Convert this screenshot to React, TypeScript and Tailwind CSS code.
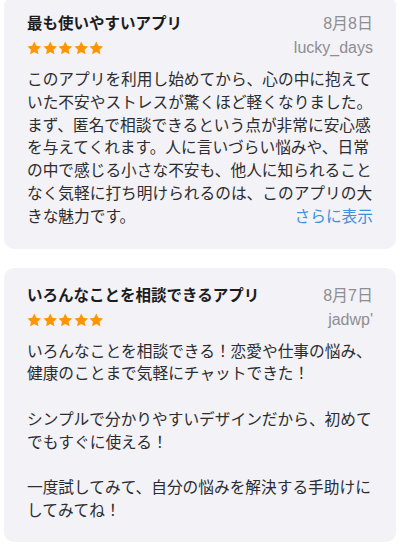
import React from "react";

const font = {
  fontFamily: '"Liberation Sans", "Noto Sans CJK JP", sans-serif',
};

function Stars() {
  return (
    <div className="flex gap-[1px]">
      {[0, 1, 2, 3, 4].map((i) => (
        <svg key={i} width="14.5" height="14" viewBox="0 0 24 23" className="block">
          <path
            d="M12 0.8l3.4 7.1 7.8 1-5.7 5.4 1.4 7.7L12 18.3l-6.9 3.7 1.4-7.7L0.8 8.9l7.8-1z"
            fill="#ff9500"
          />
        </svg>
      ))}
    </div>
  );
}

type Review = {
  title: string;
  date: string;
  user: string;
  lines: string[];
  more?: string;
};

function ReviewCard({ review, className }: { review: Review; className: string }) {
  const last = review.lines.length - 1;
  return (
    <div className={"rounded-[10px] bg-[#f2f2f7] px-[23px] pt-[17px] " + className}>
      <div className="flex h-[22px] items-center justify-between">
        <span className="text-[15.5px] font-bold text-[#1c1c1e]">{review.title}</span>
        <span className="text-[16px] text-[#8e8e93]">{review.date}</span>
      </div>
      <div className="flex h-[26px] items-center justify-between">
        <Stars />
        <span className="text-[16px] text-[#8e8e93]">{review.user}</span>
      </div>
      <div className="mt-[8px] text-[15.7px] leading-[22.8px] text-[#2c2c2e]">
        {review.lines.map((line, i) => (
          <div key={i} className="flex h-[22.8px] justify-between whitespace-nowrap">
            <span>{line}</span>
            {i === last && review.more && (
              <span className="text-[#3d8fe0]">{review.more}</span>
            )}
          </div>
        ))}
      </div>
    </div>
  );
}

const reviews: Review[] = [
  {
    title: "最も使いやすいアプリ",
    date: "8月8日",
    user: "lucky_days",
    lines: [
      "このアプリを利用し始めてから、心の中に抱えて",
      "いた不安やストレスが驚くほど軽くなりました。",
      "まず、匿名で相談できるという点が非常に安心感",
      "を与えてくれます。人に言いづらい悩みや、日常",
      "の中で感じる小さな不安も、他人に知られること",
      "なく気軽に打ち明けられるのは、このアプリの大",
      "きな魅力です。",
    ],
    more: "さらに表示",
  },
  {
    title: "いろんなことを相談できるアプリ",
    date: "8月7日",
    user: "jadwp'",
    lines: [
      "いろんなことを相談できる！恋愛や仕事の悩み、",
      "健康のことまで気軽にチャットできた！",
      "",
      "シンプルで分かりやすいデザインだから、初めて",
      "でもすぐに使える！",
      "",
      "一度試してみて、自分の悩みを解決する手助けに",
      "してみてね！",
    ],
  },
];

export default function App() {
  return (
    <div className="h-[548px] w-[400px] overflow-hidden bg-white px-[4px]" style={font}>
      <ReviewCard review={reviews[0]} className="-mt-[4px] pb-[20px]" />
      <ReviewCard review={reviews[1]} className="mt-[19px] pb-[19px]" />
    </div>
  );
}
